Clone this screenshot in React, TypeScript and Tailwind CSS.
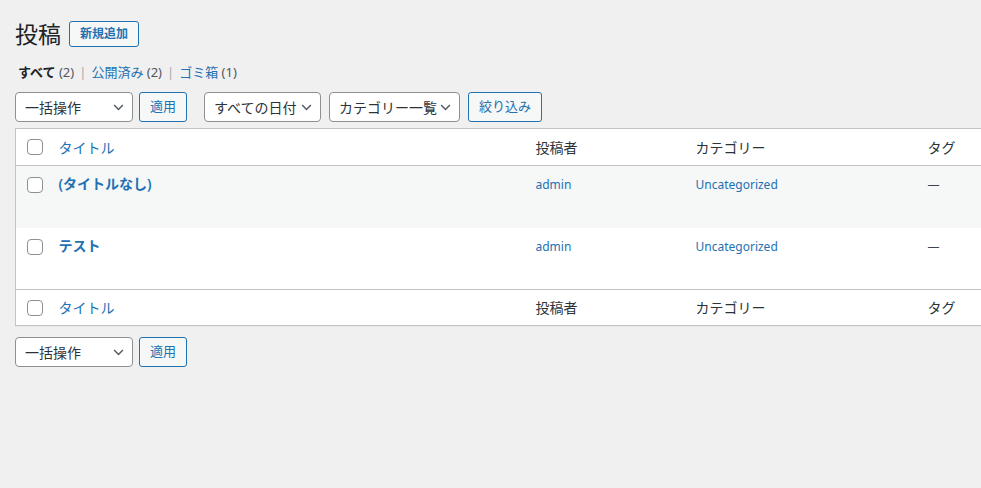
import React from "react";

const font = "font-['Noto_Sans','Noto_Sans_CJK_JP',sans-serif]";

function Chevron() {
  return (
    <svg viewBox="0 0 12 8" className="w-[11px] h-[7px] shrink-0" fill="none" stroke="#50575e" strokeWidth={1.6}>
      <path d="M1 1.2 6 6.2 11 1.2" />
    </svg>
  );
}

function Select({ label, width }: { label: string; width: string }) {
  return (
    <div
      className={`${width} h-[30px] flex items-center justify-between pl-[9px] pr-[8px] bg-white border border-[#8c8f94] rounded-[4px] text-[14px] text-[#2c3338]`}
    >
      <span className="whitespace-nowrap">{label}</span>
      <Chevron />
    </div>
  );
}

function Button({ label, width }: { label: string; width: string }) {
  return (
    <button
      className={`${width} h-[30px] flex items-center justify-center bg-[#f6f7f7] border border-[#2271b1] rounded-[3px] text-[13px] text-[#2271b1]`}
    >
      {label}
    </button>
  );
}

function Checkbox() {
  return <span className="block w-[16px] h-[16px] bg-white border border-[#8c8f94] rounded-[4px]" />;
}

function BulkActions() {
  return (
    <div className="flex items-center gap-[6px]">
      <Select label="一括操作" width="w-[118px]" />
      <Button label="適用" width="w-[48px]" />
    </div>
  );
}

const posts = [
  { title: "(タイトルなし)", bg: "bg-[#f6f7f7]" },
  { title: "テスト", bg: "bg-white" },
];

export default function App() {
  return (
    <div className={`${font} min-h-screen w-full overflow-hidden bg-[#f0f0f1] pl-[15px]`}>
      <div className="flex items-center pt-[19px]">
        <h1 className="text-[23px] leading-[30px] text-[#1d2327] font-normal">投稿</h1>
        <button className="ml-[8px] w-[70px] h-[26px] flex items-center justify-center bg-[#f6f7f7] border border-[#2271b1] rounded-[3px] text-[12px] font-semibold text-[#2271b1] whitespace-nowrap">
          新規追加
        </button>
      </div>

      <div className="mt-[11px] ml-[3px] flex items-center h-[26px] text-[13px] text-[#50575e] gap-[5px] whitespace-nowrap">
        <span>
          <span className="font-bold text-[#1d2327]">すべて</span> (2)
        </span>
        <span className="text-[#a7aaad]">|</span>
        <span>
          <span className="text-[#2271b1]">公開済み</span> (2)
        </span>
        <span className="text-[#a7aaad]">|</span>
        <span>
          <span className="text-[#2271b1]">ゴミ箱</span> (1)
        </span>
      </div>

      <div className="mt-[6px] flex items-center">
        <BulkActions />
        <div className="ml-[17px] flex items-center gap-[8px]">
          <Select label="すべての日付" width="w-[117px]" />
          <Select label="カテゴリー一覧" width="w-[131px]" />
          <Button label="絞り込み" width="w-[74px]" />
        </div>
      </div>

      <table className="mt-[6px] w-[1136px] table-fixed border-collapse border border-[#c3c4c7] bg-white shadow-[0_1px_1px_rgba(0,0,0,0.04)]">
        <colgroup>
          <col className="w-[33px]" />
          <col className="w-[477px]" />
          <col className="w-[160px]" />
          <col className="w-[232px]" />
          <col />
        </colgroup>
        <thead>
          <tr className="h-[37px] border-b border-[#c3c4c7] text-[14px] text-[#2c3338]">
            <td className="pl-[11px] align-middle">
              <Checkbox />
            </td>
            <th className="pl-[10px] text-left font-normal text-[#2271b1]">タイトル</th>
            <th className="pl-[10px] text-left font-normal">投稿者</th>
            <th className="pl-[10px] text-left font-normal">カテゴリー</th>
            <th className="pl-[10px] text-left font-normal">タグ</th>
          </tr>
        </thead>
        <tbody>
          {posts.map((p) => (
            <tr key={p.title} className={`${p.bg} h-[62px] align-top`}>
              <td className="pl-[11px] pt-[11px]">
                <Checkbox />
              </td>
              <td className="pl-[10px] pt-[8px] text-[14px] leading-[20px] font-semibold text-[#2271b1]">{p.title}</td>
              <td className="pl-[10px] pt-[9px] text-[12px] leading-[20px] text-[#2271b1]">admin</td>
              <td className="pl-[10px] pt-[9px] text-[12px] leading-[20px] text-[#2271b1]">Uncategorized</td>
              <td className="pl-[10px] pt-[9px] text-[12px] leading-[20px] text-[#3c434a]">—</td>
            </tr>
          ))}
        </tbody>
        <tfoot>
          <tr className="h-[36px] border-t border-[#c3c4c7] text-[14px] text-[#2c3338]">
            <td className="pl-[11px] align-middle">
              <Checkbox />
            </td>
            <th className="pl-[10px] text-left font-normal text-[#2271b1]">タイトル</th>
            <th className="pl-[10px] text-left font-normal">投稿者</th>
            <th className="pl-[10px] text-left font-normal">カテゴリー</th>
            <th className="pl-[10px] text-left font-normal">タグ</th>
          </tr>
        </tfoot>
      </table>

      <div className="mt-[11px]">
        <BulkActions />
      </div>
    </div>
  );
}
